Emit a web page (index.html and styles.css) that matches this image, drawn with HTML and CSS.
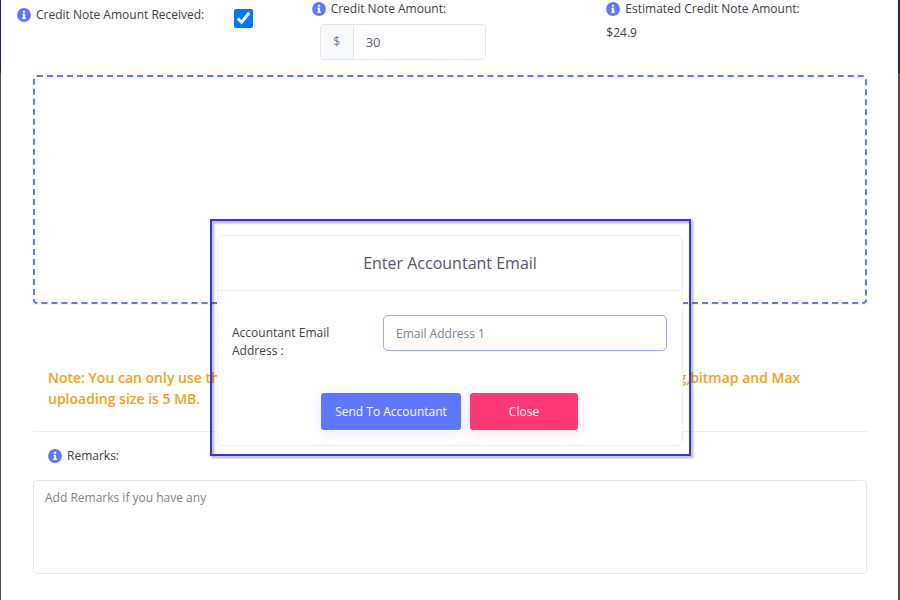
FILE: index.html
```html
<!DOCTYPE html>
<html lang="en">
<head>
<meta charset="utf-8">
<title>Credit Note</title>
<link rel="stylesheet" href="styles.css">
</head>
<body>
<svg class="sprite" aria-hidden="true">
  <symbol id="info" viewBox="0 0 14 14">
    <circle cx="7" cy="7" r="6.9" fill="#5d78ff"/>
    <path d="M5.9 2.7h2.2v2.1H5.9zM5.3 5.7h2.8v3.9h.8v1.3H5.2V9.6H6V7h-.7z" fill="#fff"/>
  </symbol>
</svg>
<main class="panel">
  <div class="fields">
    <div class="field field-check">
      <label class="label" for="received"><svg class="icon"><use href="#info"/></svg>Credit Note Amount Received:</label>
      <input class="check" id="received" type="checkbox" checked>
    </div>
    <div class="field">
      <label class="label" for="amount"><svg class="icon"><use href="#info"/></svg>Credit Note Amount:</label>
      <div class="group">
        <span class="prefix">$</span>
        <input class="amount" id="amount" type="text" value="30">
      </div>
    </div>
    <div class="field">
      <div class="label"><svg class="icon"><use href="#info"/></svg>Estimated Credit Note Amount:</div>
      <div class="value">$24.9</div>
    </div>
  </div>
  <div class="upload"><div class="dropzone"></div></div>
  <p class="note">Note: You can only use the following file types to upload: pdf, doc, docx, csv, xlsx, png, jpeg, jpg,bitmap and Max uploading size is 5 MB.</p>
  <div class="remarks">
    <label class="label" for="remarks"><svg class="icon"><use href="#info"/></svg>Remarks:</label>
    <textarea class="area" id="remarks" placeholder="Add Remarks if you have any"></textarea>
  </div>
</main>
<section class="modal" role="dialog" aria-labelledby="modal-title">
  <h2 class="title" id="modal-title">Enter Accountant Email</h2>
  <form class="form">
    <div class="row">
      <label class="email-label" for="email">Accountant Email Address :</label>
      <input class="email" id="email" type="email" placeholder="Email Address 1">
    </div>
    <div class="actions">
      <button class="btn send" type="button">Send To Accountant</button>
      <button class="btn close" type="button">Close</button>
    </div>
  </form>
</section>
</body>
</html>
```
FILE: styles.css
```css
* { box-sizing: border-box; }

body {
  margin: 0;
  min-height: 100vh;
  background: linear-gradient(#1e2454 73px, #505052 73px);
  font: 12px/18px "Open Sans", "Noto Sans", sans-serif;
  color: #404046;
}

input, textarea, button { font: inherit; }
::placeholder { color: #808294; opacity: 1; }

.sprite { display: none; }

.panel {
  min-height: 100vh;
  margin: 0 2px 0 1px;
  background: #fff;
}

.fields {
  display: grid;
  grid-template-columns: repeat(3, 1fr);
  column-gap: 3px;
  height: 75px;
  padding-left: 16px;
}

.field-check {
  display: flex;
  align-items: flex-start;
  gap: 30px;
  padding-top: 6px;
}

.label { display: flex; align-items: center; gap: 5px; }
.icon { width: 14px; height: 14px; flex: none; }
.check { width: 19px; height: 19px; margin: 3px 0 0; }

.group {
  display: flex;
  width: 166px;
  height: 36px;
  margin: 6px 0 0 8px;
  border: 1px solid #e2e5ec;
  border-radius: 4px;
  overflow: hidden;
}

.prefix {
  width: 33px;
  border-right: 1px solid #e2e5ec;
  background: #f7f8fa;
  color: #74788d;
  line-height: 33px;
  text-align: center;
}

.amount {
  flex: 1;
  min-width: 0;
  padding: 0 12px;
  border: 0;
  color: #5d6066;
  font-size: 13px;
}

.value { margin-top: 6px; }

.upload {
  margin: 0 31px 0 32px;
  border-bottom: 1px solid #f3f3f8;
}

.dropzone {
  height: 229px;
  border: 2px dashed #5d78ff;
  border-radius: 4px;
}

.note {
  margin: 0 31px 0 32px;
  padding: 62px 50px 22px 15px;
  border-bottom: 1px solid #ededf1;
  color: #f6a31c;
  font-size: 14px;
  font-weight: 600;
  line-height: 21px;
}

.remarks { padding: 15px 31px 26px 32px; }
.remarks .label { padding-left: 15px; }

.area {
  display: block;
  width: 100%;
  height: 94px;
  margin-top: 15px;
  padding: 8px 11px;
  border: 1px solid #e4e6ee;
  border-radius: 4px;
  resize: none;
}

.modal {
  position: absolute;
  top: 235px;
  left: 50%;
  width: 466px;
  transform: translateX(-50%);
  border: 1px solid #f0f0f5;
  border-radius: 5px;
  background: #fff;
}

/* Highlight frame around the dialog */
.modal::after {
  content: "";
  position: absolute;
  inset: -17px -9px -11px -8px;
  border: 2px solid #3331f0;
  filter: drop-shadow(2px 2px 1px rgba(0, 0, 0, .35));
  pointer-events: none;
}

.title {
  margin: 0;
  padding: 15px;
  border-bottom: 1px solid #ebedf2;
  color: #595568;
  font-size: 16px;
  font-weight: 500;
  line-height: 24px;
  text-align: center;
}

.form { padding: 24px 15px 15px 14px; }

.row {
  display: grid;
  grid-template-columns: 1fr 284px;
  align-items: start;
}

.email-label { width: 120px; padding-top: 9px; }

.email {
  height: 36px;
  padding: 0 12px;
  border: 1px solid #9aabff;
  border-radius: 5px;
}

.actions {
  display: flex;
  justify-content: center;
  gap: 9px;
  margin-top: 33px;
}

.btn {
  height: 37px;
  padding: 0;
  border: 0;
  border-radius: 3px;
  color: #fff;
}

.send { width: 140px; background: #5d78ff; box-shadow: 0 3px 14px rgba(93, 120, 255, .15); }
.close { width: 108px; background: #fd3977; box-shadow: 0 3px 14px rgba(253, 57, 119, .15); }
```
